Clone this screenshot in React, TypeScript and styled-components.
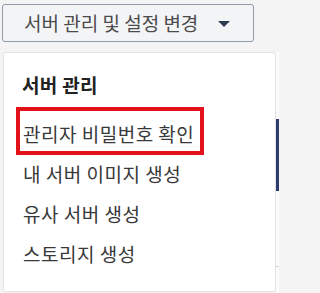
import React from 'react'
import styled, { createGlobalStyle } from 'styled-components'

const GlobalStyle = createGlobalStyle`
  body {
    margin: 0;
    background: #f4f4f5;
    font-family: 'Noto Sans CJK KR', 'Noto Sans', sans-serif;
  }
`

const menuItems = [
  { label: '관리자 비밀번호 확인', marked: true },
  { label: '내 서버 이미지 생성', marked: false },
  { label: '유사 서버 생성', marked: false },
  { label: '스토리지 생성', marked: false },
]

export default function App() {
  return (
    <>
      <GlobalStyle />
      <Page>
        <Column>
          <ToggleButton type="button">
            <span>서버 관리 및 설정 변경</span>
            <Caret />
          </ToggleButton>
          <Menu>
            <MenuHeading>서버 관리</MenuHeading>
            <MenuList>
              {menuItems.map((item) => (
                <MenuItem key={item.label} $marked={item.marked}>
                  {item.label}
                </MenuItem>
              ))}
            </MenuList>
          </Menu>
        </Column>
        <Sliver>
          <NavyBar />
          <Rule />
        </Sliver>
      </Page>
    </>
  )
}

const Page = styled.div`
  display: flex;
  align-items: flex-start;
  width: 279px;
  height: 293px;
  overflow: hidden;
`

const Column = styled.div`
  display: flex;
  flex-direction: column;
  align-items: flex-start;
  width: 276px;
  padding: 4px 0 0 2px;
  box-sizing: border-box;
`

const ToggleButton = styled.button`
  display: flex;
  align-items: center;
  gap: 20px;
  width: 252px;
  height: 38px;
  padding: 0 0 0 21px;
  box-sizing: border-box;
  border: 1px solid #8f9aad;
  border-radius: 3px;
  background: #f3f4f6;
  color: #4b4b4b;
  font-family: inherit;
  font-size: 19px;
  line-height: 24px;
  white-space: nowrap;
  cursor: pointer;
`

const Caret = styled.i`
  display: block;
  flex: none;
  width: 0;
  height: 0;
  margin-top: 2px;
  border-left: 6px solid transparent;
  border-right: 6px solid transparent;
  border-top: 6px solid #2f3c50;
`

const Menu = styled.div`
  width: 273px;
  height: 240px;
  margin: 10px 0 0 1px;
  padding: 20px 0 0 16px;
  box-sizing: border-box;
  border: 1px solid #e2e2e2;
  border-radius: 3px;
  background: #ffffff;
`

const MenuHeading = styled.div`
  padding-left: 2px;
  color: #222222;
  font-size: 19px;
  font-weight: 700;
  line-height: 24px;
  letter-spacing: 0.3px;
`

const MenuList = styled.div`
  display: flex;
  flex-direction: column;
  align-items: flex-start;
  margin-top: 14px;
`

const MenuItem = styled.div<{ $marked?: boolean }>`
  padding: 11px 6px 5px 3px;
  color: #383838;
  font-size: 19px;
  line-height: 24px;
  letter-spacing: 0.5px;
  white-space: nowrap;
  outline: ${(p) => (p.$marked ? '4px solid #e3121a' : 'none')};
  cursor: pointer;
`

const Sliver = styled.div`
  display: flex;
  flex-direction: column;
  width: 3px;
  height: 241px;
  margin-top: 52px;
  padding-top: 67px;
  box-sizing: border-box;
  background: #fbfbfb;
`

const NavyBar = styled.div`
  height: 72px;
  background: #2e3a6a;
`

const Rule = styled.div`
  height: 1px;
  margin-top: 75px;
  background: #d4d4d4;
`
